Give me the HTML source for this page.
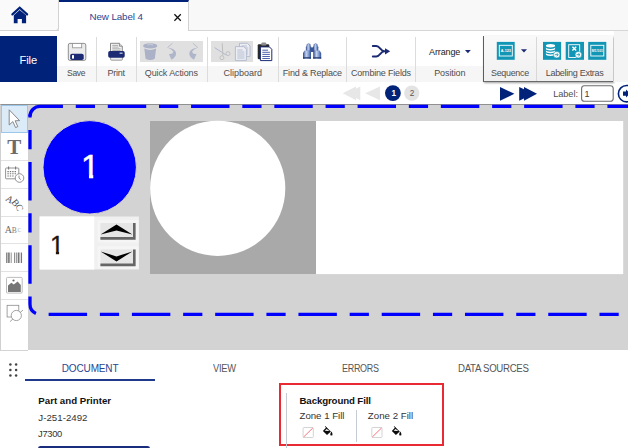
<!DOCTYPE html>
<html lang="en">
<head>
<meta charset="utf-8">
<title>New Label 4</title>
<style>
html,body{margin:0;padding:0;background:#fff;}
body{width:628px;height:448px;overflow:hidden;position:relative;font-family:"Liberation Sans",sans-serif;font-size:9px;color:#555;}
.a{position:absolute;}
.t{position:absolute;white-space:nowrap;line-height:1;}
svg{position:absolute;overflow:visible;}
/* tab strip */
#tabstrip{left:0;top:0;width:628px;height:31px;background:#f8f8f8;border-bottom:1px solid #d6d6d6;box-sizing:border-box;}
#hometab{left:0;top:0;width:58.5px;height:30.5px;background:#fafafa;border-right:1px solid #d2d2d2;border-bottom:1px solid #d2d2d2;border-radius:0 0 3px 0;box-sizing:border-box;}
#doctab{left:58.5px;top:0;width:130.5px;height:31px;background:#fff;border-top:2.6px solid #002278;border-right:1px solid #d2d2d2;box-sizing:border-box;}
/* ribbon */
#file{left:0;top:36px;width:56.5px;height:46px;background:#002278;}
.lblrow{top:65.5px;height:16.3px;background:#f6f6f6;}
.sep{top:37px;width:1px;height:44.6px;background:#dcdcdc;}
.dis{top:41.4px;height:20.5px;background:#e0e0e0;}
#addin{left:483.2px;top:35.8px;width:129.6px;height:46px;background:linear-gradient(#f9f9f9,#f0f0f0);border-left:1px solid #5c5c5c;border-bottom:1px solid #6a6a6a;box-sizing:border-box;box-shadow:1.2px 1.2px 2px rgba(0,0,0,.38);}
/* canvas */
#canvas{left:28px;top:103.6px;width:600px;height:246.4px;background:#d3d3d3;border-top:1px solid #909090;box-sizing:border-box;}
#toolbox{left:0;top:103.6px;width:28px;height:247px;background:#fff;border-left:1px solid #d0d0d0;border-top:1px solid #909090;border-bottom:1px solid #d4d4d4;box-sizing:border-box;}
.tsep{left:1px;width:27px;height:1px;background:#e2e2e2;}
#seltool{left:1.2px;top:105.2px;width:26.6px;height:27.6px;background:#dcebf8;border:1px solid #9cc6ea;box-sizing:border-box;}
</style>
</head>
<body>
<!-- ===== tab strip ===== -->
<div id="tabstrip" class="a"></div>
<div id="hometab" class="a"></div>
<div id="doctab" class="a"></div>
<span class="t" style="left:89.50px;top:12.00px;font-size:9.8px;color:#2a4590;letter-spacing:-0.101px;">New Label 4</span>

<!-- ===== ribbon ===== -->
<div class="a lblrow" style="left:56.5px;width:427px;"></div>
<div id="file" class="a"></div>
<span class="t" style="left:19.50px;top:55.00px;font-size:11.2px;color:#ffffff;letter-spacing:-0.102px;">File</span>
<div class="a sep" style="left:96.2px"></div>
<div class="a sep" style="left:135.5px"></div>
<div class="a sep" style="left:206.9px"></div>
<div class="a sep" style="left:277.9px"></div>
<div class="a sep" style="left:345.8px"></div>
<div class="a sep" style="left:415.3px"></div>
<div class="a dis" style="left:140.1px;width:63px"></div>
<div class="a dis" style="left:211.4px;width:41.5px"></div>
<div id="addin" class="a"></div>
<div class="a" style="left:536.2px;top:37px;width:1px;height:44px;background:#d8d8d8"></div>
<span class="t" style="left:67.20px;top:69.00px;font-size:9.0px;color:#4e4e4e;letter-spacing:-0.300px;transform:scaleX(0.9486);transform-origin:0 0;">Save</span><span class="t" style="left:107.60px;top:69.00px;font-size:9.0px;color:#4e4e4e;letter-spacing:-0.276px;">Print</span><span class="t" style="left:144.80px;top:69.00px;font-size:9.0px;color:#4e4e4e;letter-spacing:-0.110px;">Quick Actions</span><span class="t" style="left:223.40px;top:69.00px;font-size:9.0px;color:#4e4e4e;letter-spacing:0.010px;">Clipboard</span><span class="t" style="left:282.80px;top:69.00px;font-size:9.0px;color:#4e4e4e;letter-spacing:-0.171px;">Find &amp; Replace</span><span class="t" style="left:351.00px;top:69.00px;font-size:9.0px;color:#4e4e4e;letter-spacing:-0.194px;">Combine Fields</span><span class="t" style="left:434.20px;top:69.00px;font-size:9.0px;color:#4e4e4e;letter-spacing:-0.102px;">Position</span><span class="t" style="left:491.20px;top:69.00px;font-size:9.0px;color:#4e4e4e;letter-spacing:-0.300px;transform:scaleX(0.9914);transform-origin:0 0;">Sequence</span><span class="t" style="left:545.70px;top:69.00px;font-size:9.0px;color:#4e4e4e;letter-spacing:-0.281px;">Labeling Extras</span><span class="t" style="left:429.00px;top:48.00px;font-size:9.0px;color:#222222;letter-spacing:-0.119px;">Arrange</span>

<!-- ===== canvas ===== -->
<div id="canvas" class="a"></div>
<div id="toolbox" class="a"></div>
<div id="seltool" class="a"></div>
<div class="a tsep" style="top:160.1px"></div>
<div class="a tsep" style="top:187.9px"></div>
<div class="a tsep" style="top:215.9px"></div>
<div class="a tsep" style="top:243.4px"></div>
<div class="a tsep" style="top:271px"></div>
<div class="a tsep" style="top:298.9px"></div>

<!-- ===== bottom panel ===== -->
<div class="a" style="left:24.7px;top:379px;width:130.3px;height:1.7px;background:#1f3a8a"></div>
<div class="a" style="left:38.2px;top:445.6px;width:112.2px;height:6px;background:#1a2d7c;border-radius:2.5px 2.5px 0 0"></div>
<div class="a" style="left:279px;top:383.1px;width:165px;height:63.2px;border:2.3px solid #ea2a33;box-sizing:border-box;"></div>
<div class="a" style="left:286.2px;top:392.7px;width:1px;height:56px;background:#c6cad2"></div>
<div class="a" style="left:356.4px;top:410.4px;width:1px;height:31.3px;background:#c6cad2"></div>

<!-- ===== vector overlay (page coordinates) ===== -->
<svg id="ov" style="left:0;top:0" width="628" height="448" viewBox="0 0 628 448">
<defs>
  <linearGradient id="bino" x1="0" y1="0" x2="1" y2="0">
    <stop offset="0" stop-color="#2c4688"/><stop offset=".4" stop-color="#c4d3ef"/><stop offset=".7" stop-color="#7f9bd0"/><stop offset="1" stop-color="#33508f"/>
  </linearGradient>
</defs>
<!-- right of add-in panel -->
<rect x="613.8" y="31" width="15" height="51" fill="#f4f4f4"/>
<!-- home -->
<path d="M12.4 14.4 L19.7 7.7 L27.1 14.4" fill="none" stroke="#002278" stroke-width="2.2" stroke-linecap="round"/>
<path d="M13.8 15.3 L19.7 10 L26.1 15.3 V23.2 H21.9 V19.1 H17.6 V23.2 H13.8 Z" fill="#002278"/>
<!-- tab close -->
<path d="M174.4 14.3 L180.8 20.7 M180.8 14.3 L174.4 20.7" stroke="#111" stroke-width="1.25" fill="none"/>

<!-- save -->
<rect x="68.3" y="43.4" width="17.5" height="17" rx="1.6" fill="#ececec" stroke="#858585" stroke-width=".9"/>
<rect x="72.6" y="43.4" width="9.1" height="4.4" fill="#fff" stroke="#8f8f8f" stroke-width=".8"/>
<rect x="70.2" y="53.7" width="13.5" height="6.3" rx="1.8" fill="#1b2a72"/>
<rect x="72" y="55.1" width="2" height="3.6" rx=".6" fill="#fff"/>
<!-- print -->
<path d="M110.5 43.3 H119.4 L122.3 46.2 V52 H110.5 Z" fill="#f3f3f3" stroke="#6f6f6f" stroke-width=".8"/>
<path d="M119.4 43.3 V46.2 H122.3" fill="#ddd" stroke="#6f6f6f" stroke-width=".7"/>
<path d="M112.3 45.4 H118 M112.3 47.1 H118.6 M112.3 48.8 H120.6 M112.3 50.4 H120.6" stroke="#8e8e8e" stroke-width=".7"/>
<rect x="110.6" y="56.5" width="11.8" height="3.7" rx=".8" fill="#ececec" stroke="#777" stroke-width=".7"/>
<rect x="108.2" y="51" width="16.5" height="6.8" rx="1.7" fill="#1b2a72"/>
<rect x="119.6" y="52.6" width="3" height="1.2" fill="#c9d2ee"/>
<!-- trash (disabled) -->
<g fill="#abb1c6">
  <path d="M144.3 48.6 Q150.2 51.4 156.1 48.6 L154.8 58.8 Q150.2 61.2 145.6 58.8 Z"/>
  <ellipse cx="150.2" cy="45.9" rx="7.1" ry="2.6"/>
</g>
<path d="M147.4 45.2 Q150.2 42.9 153 45.2" fill="none" stroke="#d3d6e2" stroke-width=".8"/>
<!-- undo / redo (disabled) -->
<g id="undo">
  <path d="M172.5 43.2 L167.5 47.6" fill="none" stroke="#b4b9cb" stroke-width=".9"/>
  <path d="M167.5 47.4 Q174.8 48.4 176 52.5 Q176.6 56.8 171.4 59.8 L168.8 53.8 Q172.4 54.6 173.4 51.8 Q172 49 167.5 47.4 Z" fill="#b0b6ca"/>
</g>
<g transform="translate(365.4 0) scale(-1 1)">
  <path d="M172.5 43.2 L167.5 47.6" fill="none" stroke="#b4b9cb" stroke-width=".9"/>
  <path d="M167.5 47.4 Q174.8 48.4 176 52.5 Q176.6 56.8 171.4 59.8 L168.8 53.8 Q172.4 54.6 173.4 51.8 Q172 49 167.5 47.4 Z" fill="#b0b6ca"/>
</g>
<!-- scissors (disabled) -->
<path d="M214.6 47.6 L226.4 55.2" stroke="#a9b3d2" stroke-width=".9" fill="none"/>
<path d="M222.2 43.2 L222.9 55.6" stroke="#b9b9b9" stroke-width=".9" fill="none"/>
<circle cx="221.9" cy="57.7" r="2" fill="none" stroke="#b9b9b9" stroke-width=".8"/>
<circle cx="228" cy="53.6" r="2" fill="none" stroke="#b9b9b9" stroke-width=".8"/>
<!-- copy (disabled) -->
<path d="M239.5 43.3 H247.4 L250 45.9 V56.4 H239.5 Z" fill="#eceef3" stroke="#a9b1cc" stroke-width=".8"/>
<path d="M241.4 46 H247 M241.4 48 H248.2 M241.4 50 H248.2 M241.4 52 H248.2 M241.4 54 H248.2" stroke="#a7afca" stroke-width=".75"/>
<path d="M235.4 46.6 H243.8 L246.4 49.2 V60.4 H235.4 Z" fill="#eceef3" stroke="#a9b1cc" stroke-width=".8"/>
<path d="M237.3 50 H242.6 M237.3 52 H244.5 M237.3 54 H244.5 M237.3 56 H244.5 M237.3 58 H244.5" stroke="#a7afca" stroke-width=".75"/>
<!-- paste -->
<rect x="257.7" y="44.3" width="11.6" height="15" rx="1.2" fill="#2a2a2a"/>
<rect x="261.3" y="42.6" width="5" height="3" rx="1.2" fill="#8c8c8c"/>
<path d="M260.4 46.9 H269.4 L271.8 49.3 V60.6 H260.4 Z" fill="#fff" stroke="#1b2a72" stroke-width="1"/>
<path d="M262.3 50.2 H268 M262.3 52.3 H269.9 M262.3 54.4 H269.9 M262.3 56.5 H269.9 M262.3 58.5 H269.9" stroke="#3247a0" stroke-width=".85"/>
<!-- binoculars -->
<path d="M307.3 44.2 Q308.6 42.8 309.9 44.2 L311 47.2 V51 H306.1 V47.2 Z" fill="url(#bino)" stroke="#3a5494" stroke-width=".4"/>
<path d="M314.3 44.2 Q315.6 42.8 316.9 44.2 L318.1 47.2 V51 H313.2 V47.2 Z" fill="url(#bino)" stroke="#3a5494" stroke-width=".4"/>
<rect x="310.2" y="47.4" width="3.8" height="4.6" fill="#3a5598"/>
<path d="M304.6 50.4 H311 V58.8 H303 V53 Z" fill="url(#bino)"/>
<path d="M313.2 50.4 H319.6 L321.2 53 V58.8 H313.2 Z" fill="url(#bino)"/>
<path d="M303 57.9 H311 M313.2 57.9 H321.2" stroke="#25396f" stroke-width="1.2"/>
<!-- combine -->
<path d="M372.8 46 H376.2 C380.2 46 380.4 51.3 384.4 51.3 M372.8 56.5 H376.2 C380.2 56.5 380.4 51.3 384.4 51.3 H386" fill="none" stroke="#1b2a72" stroke-width="1.9" stroke-linecap="round"/>
<path d="M385 48.2 L390.2 51.3 L385 54.4 Z" fill="#1b2a72"/>
<!-- dropdown arrows -->
<path d="M465 50.1 H470.8 L467.9 53.3 Z" fill="#1b2a72"/>
<path d="M520.9 49.3 H527 L523.95 52.5 Z" fill="#1b2a72"/>
<!-- sequence -->
<rect x="496.8" y="41.9" width="17.9" height="17.9" fill="#1296b6"/>
<rect x="499.3" y="45.3" width="13" height="10.7" fill="none" stroke="#fff" stroke-width=".9"/>
<text x="505.8" y="52.1" font-family="Liberation Sans, sans-serif" font-size="3.8" font-weight="bold" fill="#fff" text-anchor="middle">A-123</text>
<!-- extras 1: database -->
<rect x="543" y="41.9" width="18.1" height="17.9" fill="#1296b6"/>
<g fill="#fff">
  <ellipse cx="550.5" cy="45.7" rx="4.6" ry="1.7"/>
  <path d="M545.9 47.2 a4.6 1.7 0 0 0 9.2 0 v1.5 a4.6 1.7 0 0 1 -9.2 0 z"/>
  <path d="M545.9 50 a4.6 1.7 0 0 0 9.2 0 v1.5 a4.6 1.7 0 0 1 -9.2 0 z"/>
  <path d="M545.9 52.8 a4.6 1.7 0 0 0 9.2 0 v1.5 a4.6 1.7 0 0 1 -9.2 0 z"/>
  <circle cx="556.7" cy="54.7" r="3.3" stroke="#1296b6" stroke-width=".6"/>
</g>
<path d="M554.8 54.7 H557.6 M556.7 53.3 L558.3 54.7 L556.7 56.1" fill="none" stroke="#1296b6" stroke-width=".9"/>
<!-- extras 2: sheet -->
<rect x="565.7" y="41.9" width="18.3" height="17.9" fill="#1296b6"/>
<rect x="568.7" y="44.7" width="11" height="12.8" fill="none" stroke="#fff" stroke-width=".9"/>
<path d="M572.4 46.8 L576.2 50.6 M576.2 46.8 L572.4 50.6" stroke="#fff" stroke-width="1.4"/>
<circle cx="578.4" cy="54.7" r="3.3" fill="#fff" stroke="#1296b6" stroke-width=".6"/>
<path d="M576.5 54.7 H579.3 M578.4 53.3 L580 54.7 L578.4 56.1" fill="none" stroke="#1296b6" stroke-width=".9"/>
<!-- extras 3 -->
<rect x="588.2" y="41.9" width="18.1" height="17.9" fill="#1296b6"/>
<rect x="590.8" y="45.3" width="13" height="10.7" fill="none" stroke="#fff" stroke-width=".9"/>
<text x="597.3" y="51.9" font-family="Liberation Sans, sans-serif" font-size="3.3" font-weight="bold" fill="#fff" text-anchor="middle">M1/101</text>

<!-- nav row -->
<path d="M356 86.4 V100.3 L342.7 93.35 Z M360.3 86.4 V100.3 L347 93.35 Z M380 86.4 V100.3 L365.1 93.35 Z" fill="#e7e7e7"/>
<circle cx="392.9" cy="93.05" r="7.9" fill="#002278"/>
<circle cx="411.75" cy="93.05" r="7.65" fill="#e3e3e3"/>
<path d="M500 87 V100.7 L514.4 93.85 Z M519.2 87 V100.7 L533.5 93.85 Z M524 87 V100.7 L537 93.85 Z" fill="#002278"/>
<rect x="581.6" y="85.7" width="31.6" height="15.5" rx="2.8" fill="#fff" stroke="#6e6e6e" stroke-width="1.1"/>
<circle cx="626.6" cy="93.65" r="8.2" fill="#fff" stroke="#002278" stroke-width="1.6"/>
<path d="M623 91.6 H626 V89.4 L630 93.6 L626 97.6 V95.7 H623 Z" fill="#002278"/>

<!-- dashed label outline -->
<path d="M30 125 V116.4 A10 10 0 0 1 40 106.4 H700" fill="none" stroke="#0000ff" stroke-width="3.3" stroke-dasharray="38.43 12.81 19.22 12.81" stroke-dashoffset="74.54"/>
<path d="M30 118 V304.3 A10 10 0 0 0 40 314.3 H700" fill="none" stroke="#0000ff" stroke-width="3.3" stroke-dasharray="38.43 12.81 19.22 12.81" stroke-dashoffset="39.27"/>
<path d="M30 114.5 V117.5" stroke="#0000ff" stroke-width="3.3" fill="none"/>
<!-- zone 1 -->
<circle cx="89.7" cy="167.3" r="46.7" fill="#0000ff" stroke="#e6dfc4" stroke-width=".9"/>
<rect x="39.6" y="216.5" width="99.3" height="53" fill="#f0f0f0"/>
<rect x="39.6" y="216.5" width="54.7" height="53" fill="#fff"/>
<!-- spinner -->
<rect x="97.6" y="220" width="40.9" height="22.4" fill="#f5f5f5"/>
<rect x="97.6" y="246.3" width="40.9" height="22.4" fill="#f5f5f5"/>
<rect x="100.4" y="223" width="35.2" height="16.7" fill="#e6e6e6"/>
<path d="M134.3 223 V238.4 H100.4" fill="none" stroke="#666" stroke-width="2.6"/>
<path d="M100.6 234.6 L116.5 224.4 L132.4 234.6 L116.5 230.4 Z" fill="#000"/>
<rect x="100.4" y="249.4" width="35.2" height="16.8" fill="#e6e6e6"/>
<path d="M134.3 249.4 V264.9 H100.4" fill="none" stroke="#666" stroke-width="2.6"/>
<path d="M100.6 251.4 L116.5 256.4 L132.4 251.4 L116.5 261.6 Z" fill="#000"/>
<!-- zone 2 -->
<rect x="150" y="121" width="166" height="153" fill="#a9a9a9"/>
<circle cx="217.7" cy="188.3" r="67.6" fill="#fff"/>
<rect x="316" y="121" width="307.2" height="153.1" fill="#fff"/>

<!-- toolbox icons -->
<path d="M9.2 109.8 V125 L12.8 121.6 L15.6 127.6 L17.8 126.6 L15.1 120.8 L19.6 120.6 Z" fill="#fff" stroke="#7a7a7a" stroke-width=".9" stroke-linejoin="round"/>
<text x="14.3" y="153.9" font-family="Liberation Serif, serif" font-size="21" font-weight="bold" fill="#6b6b6b" text-anchor="middle">T</text>
<!-- calendar-clock -->
<g fill="none" stroke="#777" stroke-width=".8">
  <rect x="5.6" y="168" width="13.2" height="10.8" rx=".8" fill="#fff"/>
  <path d="M8.6 166.6 V169.4 M15.6 166.6 V169.4" stroke-width="1.1"/>
  <path d="M7.4 171.6 H17 M7.4 173.8 H17 M7.4 176 H14" stroke-dasharray="1.4 1" stroke-width="1.1"/>
  <circle cx="19.5" cy="178" r="4.3" fill="#fff"/>
  <path d="M19 175.6 V178.2 L20.8 179.6" />
</g>
<!-- arc text -->
<g font-family="Liberation Serif, serif" font-size="9.6" fill="#4f4f4f" text-anchor="middle">
  <text transform="translate(9.6 199.2) rotate(32)" y="3.2">A</text>
  <text transform="translate(15.4 202.8) rotate(52)" y="3.2">B</text>
  <text transform="translate(19.6 207.6) rotate(72)" y="3.2">C</text>
</g>
<!-- shrinking text -->
<g font-family="Liberation Serif, serif" fill="#6a6a6a">
  <text x="4.8" y="233.4" font-size="10">A</text>
  <text x="11.8" y="233" font-size="7.6" fill="#808080">B</text>
  <text x="17.6" y="232.4" font-size="5.6" fill="#a8a8a8">C</text>
</g>
<!-- barcode -->
<g stroke="#777">
  <path d="M6.8 252.5 V263" stroke-width="1.3"/><path d="M8.9 252.5 V263" stroke-width="1.6"/>
  <path d="M11.2 252.5 V263" stroke-width=".8"/><path d="M14.6 252.5 V263" stroke-width=".9"/>
  <path d="M16.4 252.5 V263" stroke-width=".8"/><path d="M18.6 252.5 V263" stroke-width="1.8"/>
  <path d="M21.4 252.5 V263" stroke-width="1.3"/>
</g>
<!-- picture -->
<rect x="6.5" y="277.4" width="15.7" height="15.7" rx="1" fill="#fff" stroke="#b5b5b5" stroke-width=".9"/>
<path d="M8 292 V285.6 L11.4 282.8 L13.8 284.6 L17.6 281.6 L20.8 285 V292 Z" fill="#757575"/>
<circle cx="13.5" cy="280.5" r="1.1" fill="#666"/>
<!-- shapes -->
<rect x="7.1" y="305.3" width="11.7" height="11.7" fill="#fff" stroke="#8c8c8c" stroke-width=".8"/>
<path d="M10 321.6 L23 310" stroke="#8c8c8c" stroke-width=".8"/>
<circle cx="16.3" cy="315.5" r="5.1" fill="#fff" stroke="#8c8c8c" stroke-width=".8"/>

<!-- drag handle dots -->
<g fill="#444">
  <circle cx="10.4" cy="364.6" r="1.25"/><circle cx="16.1" cy="364.6" r="1.25"/>
  <circle cx="10.4" cy="370" r="1.25"/><circle cx="16.1" cy="370" r="1.25"/>
  <circle cx="10.4" cy="375.4" r="1.25"/><circle cx="16.1" cy="375.4" r="1.25"/>
</g>
<!-- no-fill + bucket icons -->
<g id="nf1">
  <rect x="303.1" y="427.5" width="10.2" height="10" fill="#fff" stroke="#cfcfcf" stroke-width=".9" rx=".8"/>
  <path d="M303.6 437 L312.8 428" stroke="#f4646c" stroke-width=".9"/>
</g>
<g id="bk1">
  <path d="M326.4 427.2 L330.9 431.5 L327 435 L322.9 431 Z" fill="#0c0c0c"/>
  <path d="M325.4 426.3 L327.6 429.6" stroke="#0c0c0c" stroke-width=".9" fill="none"/>
  <path d="M324.8 430.8 L326.6 429 L329.6 431 Z" fill="#fff"/>
  <path d="M331.4 431.6 Q332.7 433.3 332.4 433.9 A1.1 1.1 0 1 1 330.4 433.9 Q330.2 433.3 331.4 431.6 Z" fill="#0c0c0c"/>
</g>
<g transform="translate(68.7 0)">
  <rect x="303.1" y="427.5" width="10.2" height="10" fill="#fff" stroke="#cfcfcf" stroke-width=".9" rx=".8"/>
  <path d="M303.6 437 L312.8 428" stroke="#f4646c" stroke-width=".9"/>
</g>
<g transform="translate(68.9 0)">
  <path d="M326.4 427.2 L330.9 431.5 L327 435 L322.9 431 Z" fill="#0c0c0c"/>
  <path d="M325.4 426.3 L327.6 429.6" stroke="#0c0c0c" stroke-width=".9" fill="none"/>
  <path d="M324.8 430.8 L326.6 429 L329.6 431 Z" fill="#fff"/>
  <path d="M331.4 431.6 Q332.7 433.3 332.4 433.9 A1.1 1.1 0 1 1 330.4 433.9 Q330.2 433.3 331.4 431.6 Z" fill="#0c0c0c"/>
</g>

</svg>

<span class="t" style="left:391.40px;top:90.00px;font-size:8.2px;color:#ffffff;font-weight:bold;">1</span><span class="t" style="left:409.80px;top:90.00px;font-size:8.2px;color:#555555;">2</span><span class="t" style="left:553.20px;top:90.00px;font-size:9.2px;color:#4e4e4e;letter-spacing:-0.056px;">Label:</span><span class="t" style="left:584.60px;top:90.00px;font-size:9.0px;color:#4a3a2a;">1</span><span class="t" style="left:81.00px;top:150.00px;font-size:33.0px;color:#ffffff;-webkit-text-stroke:0.5px #fff;clip-path:polygon(-2px -2px,30px -2px,30px 24.6px,12.25px 24.6px,12.25px 34px,7.95px 34px,7.95px 24.6px,-2px 24.6px);">1</span><span class="t" style="left:50.10px;top:233.00px;font-size:25.0px;color:#20140c;-webkit-text-stroke:0.3px #20140c;clip-path:polygon(-2px -2px,24px -2px,24px 18.7px,9.0px 18.7px,9.0px 27px,5.8px 27px,5.8px 18.7px,-2px 18.7px);">1</span>
<span class="t" style="left:61.80px;top:364.00px;font-size:10.0px;color:#2a4590;letter-spacing:-0.152px;">DOCUMENT</span><span class="t" style="left:212.80px;top:364.00px;font-size:10.0px;color:#555555;letter-spacing:-0.300px;transform:scaleX(0.9319);transform-origin:0 0;">VIEW</span><span class="t" style="left:341.60px;top:364.00px;font-size:10.0px;color:#555555;letter-spacing:-0.300px;transform:scaleX(0.8963);transform-origin:0 0;">ERRORS</span><span class="t" style="left:458.10px;top:364.00px;font-size:10.0px;color:#555555;letter-spacing:-0.300px;transform:scaleX(0.9644);transform-origin:0 0;">DATA SOURCES</span>
<span class="t" style="left:38.30px;top:396.00px;font-size:9.7px;color:#111111;font-weight:bold;letter-spacing:0.006px;">Part and Printer</span><span class="t" style="left:38.30px;top:413.00px;font-size:9.7px;color:#333333;letter-spacing:0.020px;">J-251-2492</span><span class="t" style="left:38.30px;top:429.00px;font-size:9.7px;color:#333333;letter-spacing:-0.300px;transform:scaleX(0.9649);transform-origin:0 0;">J7300</span><span class="t" style="left:299.50px;top:396.00px;font-size:9.7px;color:#111111;font-weight:bold;letter-spacing:-0.122px;">Background Fill</span><span class="t" style="left:299.50px;top:411.00px;font-size:9.7px;color:#333333;letter-spacing:-0.027px;">Zone 1 Fill</span><span class="t" style="left:367.80px;top:411.00px;font-size:9.7px;color:#333333;letter-spacing:0.013px;">Zone 2 Fill</span>
</body>
</html>
